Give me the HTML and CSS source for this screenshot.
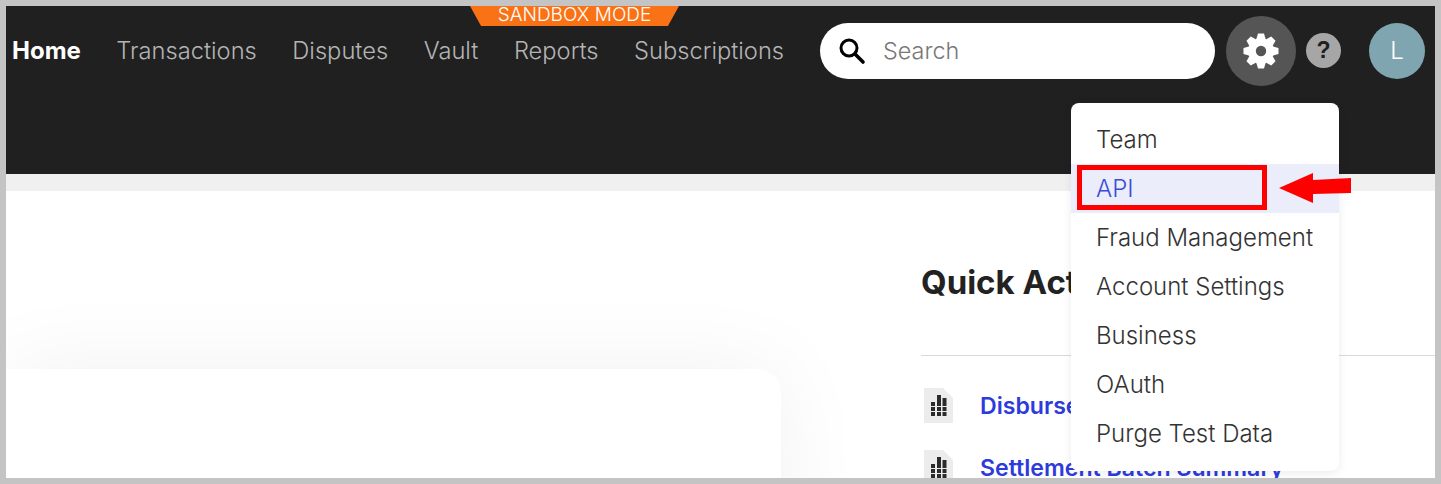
FILE: index.html
```html
<!DOCTYPE html>
<html lang="en">
  <head>
    <meta charset="UTF-8" />
    <title>Dashboard</title>
    <link rel="stylesheet" href="styles.css">
  </head>
  <body>
    <div class="frame">
      <header class="topbar">
        <div class="sandbox-badge">SANDBOX MODE</div>
        <div class="topbar-row">
          <nav class="nav">
            <a class="nav-link nav-link-active" href="#">Home</a>
            <a class="nav-link" href="#">Transactions</a>
            <a class="nav-link" href="#">Disputes</a>
            <a class="nav-link" href="#">Vault</a>
            <a class="nav-link" href="#">Reports</a>
            <a class="nav-link" href="#">Subscriptions</a>
          </nav>
          <div class="search">
            <svg class="search-icon" width="28" height="28" viewBox="0 0 28 28">
              <circle cx="11" cy="11" r="8" fill="none" stroke="#000" stroke-width="3" />
              <path d="M17 17 L25 25" stroke="#000" stroke-width="3.6" stroke-linecap="round" />
            </svg>
            <span class="search-text">Search</span>
          </div>
          <div class="settings-btn">
            <svg width="36" height="36" viewBox="-18 -18 36 36">
              <g fill="#fff">
                <circle r="13" />
                <polygon points="-4.600,-12 -3,-17.500 3,-17.500 4.600,-12" />
                <polygon points="-4.600,-12 -3,-17.500 3,-17.500 4.600,-12" transform="rotate(45)" />
                <polygon points="-4.600,-12 -3,-17.500 3,-17.500 4.600,-12" transform="rotate(90)" />
                <polygon points="-4.600,-12 -3,-17.500 3,-17.500 4.600,-12" transform="rotate(135)" />
                <polygon points="-4.600,-12 -3,-17.500 3,-17.500 4.600,-12" transform="rotate(180)" />
                <polygon points="-4.600,-12 -3,-17.500 3,-17.500 4.600,-12" transform="rotate(225)" />
                <polygon points="-4.600,-12 -3,-17.500 3,-17.500 4.600,-12" transform="rotate(270)" />
                <polygon points="-4.600,-12 -3,-17.500 3,-17.500 4.600,-12" transform="rotate(315)" />
              </g>
              <circle r="5.200" fill="#555" />
            </svg>
          </div>
          <div class="help-btn">?</div>
          <div class="avatar">L</div>
        </div>
      </header>

      <div class="subbar"></div>

      <main class="content">
        <section class="left-col">
          <div class="card"></div>
        </section>
        <section class="right-col">
          <h2 class="quick-title">Quick Actions</h2>
          <div class="quick-list">
            <a class="quick-row" href="#">
              <svg class="doc-icon" width="29" height="35" viewBox="0 0 29 35">
                <path d="M0 0 H19 L29 10 V35 H0 Z" fill="#ececec" />
                <path d="M7 14 h4 v14 h-4 Z M13 7 h4 v21 h-4 Z M18.500 10 h4 v18 h-4 Z" fill="#2b2b2b" />
                <path d="M6 18.500 H24 M6 23.500 H24" stroke="#ececec" stroke-width="1.200" />
              </svg>
              <span class="quick-label">Disbursement Summary</span>
            </a>
            <a class="quick-row" href="#">
              <svg class="doc-icon" width="29" height="35" viewBox="0 0 29 35">
                <path d="M0 0 H19 L29 10 V35 H0 Z" fill="#ececec" />
                <path d="M7 14 h4 v14 h-4 Z M13 7 h4 v21 h-4 Z M18.500 10 h4 v18 h-4 Z" fill="#2b2b2b" />
                <path d="M6 18.500 H24 M6 23.500 H24" stroke="#ececec" stroke-width="1.200" />
              </svg>
              <span class="quick-label">Settlement Batch Summary</span>
            </a>
          </div>
        </section>
      </main>

      <ul class="menu">
        <li class="menu-item">Team</li>
        <li class="menu-item menu-item-active">API</li>
        <li class="menu-item">Fraud Management</li>
        <li class="menu-item">Account Settings</li>
        <li class="menu-item">Business</li>
        <li class="menu-item">OAuth</li>
        <li class="menu-item">Purge Test Data</li>
      </ul>

      <div class="callout-box"></div>
      <svg class="callout-arrow" width="74" height="32" viewBox="0 0 74 32">
        <path d="M1 16 L35 1 L35 8 L73 6 L73 21 L35 22 L35 31 Z" fill="#f00" />
      </svg>
    </div>
  </body>
</html>
```

FILE: styles.css
```css
:root {
  --frame-color: #c4c4c4;
  --bar-color: #202020;
  --nav-color: #b4b4b4;
  --link-color: #2e3bdb;
}

* {
  box-sizing: border-box;
}

html,
body {
  height: 100%;
  margin: 0;
}

body {
  font-family: "Inter", "Lato", sans-serif;
  font-weight: 300;
  color: #222;
  background-color: #fff;
}

a {
  color: inherit;
  text-decoration: none;
}

.frame {
  position: relative;
  display: flex;
  flex-direction: column;
  width: 1441px;
  height: 484px;
  border: 6px solid var(--frame-color);
  overflow: hidden;
}

.topbar {
  position: relative;
  flex: none;
  height: 168px;
  background-color: var(--bar-color);
}

.topbar-row {
  display: flex;
  align-items: flex-start;
  padding: 17px 0 0 6px;
}

.sandbox-badge {
  position: absolute;
  top: 0;
  left: 464px;
  width: 209px;
  height: 20px;
  color: #fff;
  background-color: #f97316;
  font-size: 19px;
  font-weight: 300;
  line-height: 17px;
  text-align: center;
  clip-path: polygon(0 0, 100% 0, 94.700% 100%, 5.300% 100%);
}

.nav {
  display: flex;
  gap: 35.500px;
  width: 808px;
  height: 54px;
  align-items: center;
  font-size: 23.700px;
}

.nav-link {
  color: var(--nav-color);
}

.nav-link-active {
  color: #fff;
  font-size: 24px;
  font-weight: 700;
}

.search {
  display: flex;
  align-items: center;
  gap: 17px;
  width: 395px;
  height: 56px;
  padding-left: 18px;
  border-radius: 28px;
  background-color: #fff;
}

.search-text {
  position: relative;
  top: -1px;
  font-size: 23.400px;
  color: #777;
}

.settings-btn {
  display: flex;
  align-items: center;
  justify-content: center;
  width: 70px;
  height: 70px;
  margin: -7px 0 0 11px;
  border-radius: 50%;
  background-color: #555;
}

.help-btn {
  width: 35px;
  height: 35px;
  margin: 10px 0 0 10px;
  border-radius: 50%;
  background-color: #a6a6a6;
  color: #202020;
  font-family: "Liberation Sans", sans-serif;
  font-size: 23px;
  font-weight: 700;
  line-height: 35px;
  text-align: center;
}

.avatar {
  width: 56px;
  height: 56px;
  margin-left: 28px;
  border-radius: 50%;
  background-color: #7fa6b0;
  color: #fff;
  font-size: 24px;
  line-height: 55px;
  text-align: center;
}

.subbar {
  flex: none;
  height: 17px;
  background-color: #f0f0f0;
}

.content {
  flex: 1;
  display: flex;
  min-height: 0;
  overflow: hidden;
  background-color: #fff;
}

.left-col {
  flex: none;
  width: 915px;
  padding-top: 178px;
}

.card {
  width: 775px;
  height: 400px;
  border-radius: 0 24px 0 0;
  background-color: #fff;
  box-shadow: 0 0 90px 0 #0000000f;
}

.right-col {
  flex: 1;
  padding-top: 71px;
}

.quick-title {
  margin: 0;
  height: 94px;
  border-bottom: 1px solid #d9d9d9;
  color: #222;
  font-size: 33px;
  font-weight: 700;
  line-height: 40px;
}

.quick-list {
  display: flex;
  flex-direction: column;
  gap: 27px;
  padding: 32px 0 0 3px;
}

.quick-row {
  display: flex;
  align-items: center;
  gap: 27px;
  height: 35px;
  color: var(--link-color);
  font-size: 23.100px;
  font-weight: 600;
}

.doc-icon {
  flex: none;
}

.quick-label {
  white-space: nowrap;
}

.menu {
  position: absolute;
  top: 97px;
  left: 1065px;
  width: 268px;
  margin: 0;
  padding: 12px 0 13px;
  list-style: none;
  border-radius: 8px;
  background-color: #fff;
  box-shadow: 0 2px 10px #00000014;
}

.menu-item {
  height: 49px;
  padding-left: 25px;
  color: #333;
  font-size: 24px;
  line-height: 49px;
}

.menu-item-active {
  background-color: #ebedfa;
  color: #3b4cd8;
}

.callout-box {
  position: absolute;
  top: 159px;
  left: 1071px;
  width: 190px;
  height: 45px;
  border: 5px solid #f00;
}

.callout-arrow {
  position: absolute;
  top: 166px;
  left: 1272px;
}
```
